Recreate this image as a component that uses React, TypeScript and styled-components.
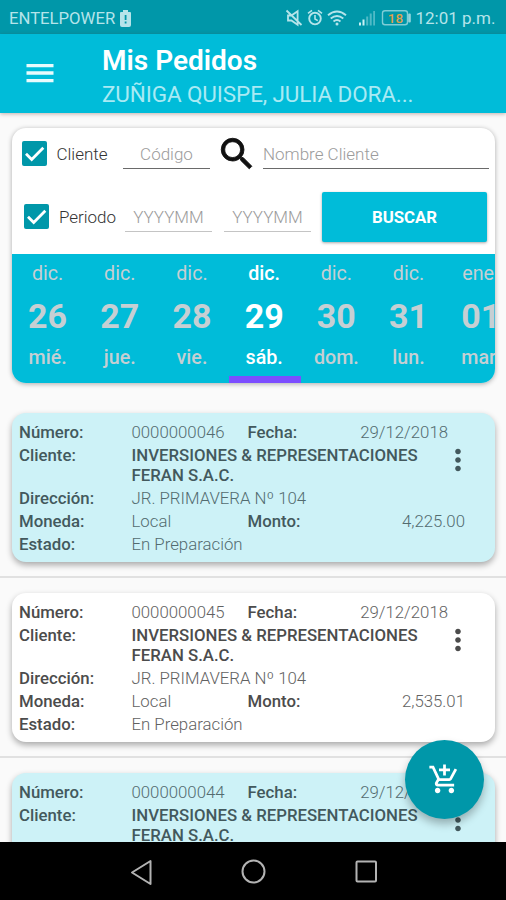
import React from "react";
import styled, { createGlobalStyle } from "styled-components";
import { MdSearch, MdAddShoppingCart, MdMoreVert } from "react-icons/md";

const GlobalStyle = createGlobalStyle`
  * { box-sizing: border-box; }
  body { margin: 0; background: #fafafa; font-family: Roboto, sans-serif; }
`;

const Screen = styled.div`
  position: relative;
  width: 506px;
  height: 900px;
  display: flex;
  flex-direction: column;
  overflow: hidden;
  background: #fafafa;
`;

const StatusBar = styled.div`
  height: 34px;
  flex: none;
  display: flex;
  align-items: center;
  padding: 2px 11.5px 0 9px;
  background: #0097a9;
  color: #b5e4ea;
`;

const Carrier = styled.span`
  font-size: 16.7px;
  letter-spacing: 0;
  margin-right: 5px;
`;

const StatusIcons = styled.div`
  display: flex;
  align-items: center;
  margin-left: auto;
`;

const Clock = styled.span`
  font-size: 17px;
  width: 79px;
  margin-left: 4.5px;
  white-space: nowrap;
`;

const AppBar = styled.header`
  position: relative;
  z-index: 1;
  height: 79px;
  flex: none;
  display: flex;
  padding-left: 26px;
  background: #00bcd9;
  box-shadow: 0 1px 4px rgba(90, 40, 30, 0.35);
`;

const MenuButton = styled.div`
  width: 76px;
  padding-top: 29px;
`;

const Titles = styled.div`
  padding-top: 10px;
`;

const Title = styled.h1`
  margin: 0;
  font-size: 28px;
  line-height: 34px;
  font-weight: 600;
  letter-spacing: 0;
  color: #fff;
`;

const Subtitle = styled.div`
  font-size: 22.5px;
  line-height: 33px;
  font-weight: 400;
  letter-spacing: -0.12px;
  color: #a9eaf4;
`;

const Content = styled.main`
  flex: 1;
  min-height: 0;
  overflow: hidden;
`;

const FilterCard = styled.section`
  margin: 15px 11px 0 12px;
  height: 255px;
  border-radius: 14px;
  background: #fff;
  box-shadow: 0 1px 5px rgba(0, 0, 0, 0.32);
  overflow: hidden;
`;

const FilterRow = styled.div<{ $h: number; $left: number }>`
  display: flex;
  align-items: center;
  height: ${(p) => p.$h}px;
  padding-left: ${(p) => p.$left}px;
`;

const CheckBox = styled.div`
  width: 25px;
  height: 25px;
  flex: none;
  border-radius: 2px;
  background: #0097a9;
  display: flex;
`;

const FilterLabel = styled.span<{ $w: number }>`
  width: ${(p) => p.$w}px;
  padding-left: 9.5px;
  flex: none;
  font-size: 17px;
  font-weight: 300;
  color: #333;
`;

const Field = styled.div<{ $w: number; $gap?: number; $soft?: boolean; $align?: string }>`
  width: ${(p) => p.$w}px;
  height: 30px;
  flex: none;
  margin-right: ${(p) => p.$gap ?? 0}px;
  border-bottom: ${(p) => (p.$soft ? "1px solid #c4c4c4" : "1.5px solid #6a6a6a")};
  text-align: ${(p) => p.$align ?? "center"};
  font-size: 17px;
  line-height: 30px;
  font-weight: 300;
  color: #9c9c9c;
`;

const SearchIcon = styled(MdSearch)`
  width: 42px;
  height: 42px;
  flex: none;
  margin: 0 5.5px;
  color: #111;
  path:not([fill="none"]) {
    stroke: #111;
    stroke-width: 0.5px;
  }
`;

const SearchButton = styled.button`
  width: 165px;
  height: 50px;
  border: 0;
  border-radius: 2px;
  background: #00bcd9;
  color: #fff;
  font: 700 16.8px Roboto, sans-serif;
  box-shadow: 0 1px 3px rgba(0, 0, 0, 0.35);
`;

const Days = styled.div`
  display: flex;
  height: 129px;
  background: #00bcd9;
  overflow: hidden;
`;

const Day = styled.div<{ $active: boolean }>`
  width: 72.2px;
  flex: none;
  height: 129px;
  display: flex;
  flex-direction: column;
  align-items: center;
  padding: 8px 1px 0 0;
  color: ${(p) => (p.$active ? "#fff" : "#c6cfd3")};
  font-size: 19.7px;
  line-height: 24px;
  font-weight: 500;
  border-bottom: 7px solid ${(p) => (p.$active ? "#7c4dff" : "transparent")};
`;

const Month = styled.span<{ $active: boolean }>`
  font-weight: ${(p) => (p.$active ? 500 : 400)};
`;

const DayNumber = styled.span`
  font-size: 34px;
  line-height: 60px;
  font-weight: 700;
`;

const OrderItem = styled.div`
  height: 180px;
  padding: 15px 11px 15px 12px;
  border-bottom: 2px solid #e1e1e1;
`;

const OrderList = styled.div`
  padding-top: 15px;
`;

const OrderCard = styled.article<{ $tinted: boolean }>`
  height: 149px;
  border-radius: 14px;
  padding: 9px 0 0 7px;
  background: ${(p) => (p.$tinted ? "#cdf2f7" : "#fff")};
  box-shadow: 0 3px 6px rgba(0, 0, 0, 0.33);
  display: grid;
  grid-template-columns: 112.5px 116px 178px 1fr;
  grid-auto-rows: min-content;
  row-gap: 3px;
  font-size: 16.8px;
  line-height: 20px;
  color: ${(p) => (p.$tinted ? "#43595d" : "#4c4c4c")};
  white-space: nowrap;
`;

const Label = styled.span`
  font-weight: 500;
`;

const Value = styled.span`
  font-weight: 300;
  opacity: 0.88;
`;

const WideValue = styled(Value)`
  grid-column: 2 / -1;
`;

const Customer = styled.span`
  grid-column: 2 / 4;
  font-weight: 500;
`;

const Pair = styled.span<{ $end: number }>`
  grid-column: 3 / -1;
  display: flex;
  justify-content: space-between;
  padding-right: ${(p) => p.$end}px;
`;

const More = styled.span`
  grid-column: 4;
  height: 20px;
  svg { width: 34px; height: 34px; margin: -2px 0 0 15px; display: block; }
`;

const Fab = styled.div`
  position: absolute;
  z-index: 2;
  left: 405px;
  top: 740px;
  width: 79px;
  height: 79px;
  border-radius: 50%;
  background: #0097a9;
  color: #fff;
  display: flex;
  align-items: center;
  justify-content: center;
  box-shadow: 0 5px 8px rgba(0, 0, 0, 0.28);
  svg { width: 33px; height: 33px; margin-top: -1px; }
`;

const NavBar = styled.nav`
  height: 58px;
  flex: none;
  background: #000;
  display: flex;
  justify-content: center;
  svg { display: block; }
`;

const Check = () => (
  <CheckBox>
    <svg width="25" height="25" viewBox="0 0 25 25" fill="none" stroke="#fff" strokeWidth="2.8">
      <path d="M4 12.7 9.7 18.4 21.3 6.8" />
    </svg>
  </CheckBox>
);

const days: [string, string, string][] = [
  ["dic.", "26", "mié."],
  ["dic.", "27", "jue."],
  ["dic.", "28", "vie."],
  ["dic.", "29", "sáb."],
  ["dic.", "30", "dom."],
  ["dic.", "31", "lun."],
  ["ene.", "01", "mar."],
];

const orders = [
  { id: "0000000046", amount: "4,225.00" },
  { id: "0000000045", amount: "2,535.01" },
  { id: "0000000044", amount: "4,225.00" },
];

const StatusGlyphs = () => (
  <svg width="126" height="20" viewBox="0 0 126 20" fill="none" stroke="#b5e4ea" strokeWidth="1.6">
    <path d="M3 7.5v5h3.4l6.2 4.2V3.3L6.4 7.5zM1.5 2.5l15 14.5" strokeWidth="1.8" />
    <circle cx="30" cy="10.6" r="5.8" strokeWidth="1.9" />
    <path d="M30 7v4l2.8 1.6M23 5.3l4-3M37 5.3l-4-3" />
    <path d="M43 7.3q9-7.5 18 0M45.7 10.5q6.3-5 12.6 0M48.5 13.4q3.5-2.8 7 0" strokeWidth="1.9" />
    <circle cx="52" cy="16" r="1.5" fill="#b5e4ea" stroke="none" />
    <g stroke="none" fill="#c9f1f5">
      <rect x="74" y="14.5" width="2" height="3" />
      <rect x="77.5" y="11.5" width="2" height="6" />
      <rect x="81.2" y="8.5" width="2" height="9" opacity=".4" />
      <rect x="84.7" y="5.5" width="2" height="12" opacity=".4" />
      <rect x="88.2" y="3" width="1.8" height="14.5" opacity=".4" />
    </g>
    <rect x="97.5" y="2.8" width="25" height="14" rx="2.5" strokeWidth="1.4" opacity=".7" />
    <rect x="123.2" y="5.5" width="2.6" height="9" rx="1" fill="#b5e4ea" stroke="none" opacity=".8" />
    <text x="110.5" y="14.6" textAnchor="middle" fontSize="13.5" fontWeight="500" letterSpacing=".2" fill="#dfa04c" stroke="none">18</text>
  </svg>
);

export default function App() {
  return (
    <>
      <GlobalStyle />
      <Screen>
        <StatusBar>
          <Carrier>ENTELPOWER</Carrier>
          <svg width="11" height="17" viewBox="0 0 11 17">
            <path d="M3 0h5v2h2q1 0 1 1v12q0 2-2 2H2q-2 0-2-2V3q0-1 1-1h2z" fill="#b5e4ea" />
            <path d="M4.7 5h1.8v5H4.7zM4.7 11.5h1.8v2H4.7z" fill="#0097a9" />
          </svg>
          <StatusIcons>
            <StatusGlyphs />
            <Clock>12:01 p.m.</Clock>
          </StatusIcons>
        </StatusBar>
        <AppBar>
          <MenuButton>
            <svg width="28" height="20" viewBox="0 0 28 20" fill="#e9fbfd">
              <path d="M.5 1h27v3.2H.5zM.5 8.3h27v3.4H.5zM.5 16h27v3.2H.5z" />
            </svg>
          </MenuButton>
          <Titles>
            <Title>Mis Pedidos</Title>
            <Subtitle>ZUÑIGA QUISPE, JULIA DORA...</Subtitle>
          </Titles>
        </AppBar>
        <Content>
          <FilterCard>
            <FilterRow $h={51} $left={10}>
              <Check />
              <FilterLabel $w={76}>Cliente</FilterLabel>
              <Field $w={87}>Código</Field>
              <SearchIcon />
              <Field $w={226} $align="left">Nombre Cliente</Field>
            </FilterRow>
            <FilterRow $h={75} $left={12.4}>
              <Check />
              <FilterLabel $w={75.6}>Periodo</FilterLabel>
              <Field $w={87} $gap={12} $soft>YYYYMM</Field>
              <Field $w={87} $gap={11} $soft>YYYYMM</Field>
              <SearchButton>BUSCAR</SearchButton>
            </FilterRow>
            <Days>
              {days.map(([month, number, weekday]) => (
                <Day key={number} $active={number === "29"}>
                  <Month $active={number === "29"}>{month}</Month>
                  <DayNumber>{number}</DayNumber>
                  <span>{weekday}</span>
                </Day>
              ))}
            </Days>
          </FilterCard>
          <OrderList>
            {orders.map((order, i) => (
              <OrderItem key={order.id}>
                <OrderCard $tinted={i % 2 === 0}>
                  <Label>Número:</Label>
                  <Value>{order.id}</Value>
                  <Pair $end={47}>
                    <Label>Fecha:</Label>
                    <Value>29/12/2018</Value>
                  </Pair>
                  <Label>Cliente:</Label>
                  <Customer>
                    INVERSIONES &amp; REPRESENTACIONES
                    <br />
                    FERAN S.A.C.
                  </Customer>
                  <More>
                    <MdMoreVert />
                  </More>
                  <Label>Dirección:</Label>
                  <WideValue>JR. PRIMAVERA Nº 104</WideValue>
                  <Label>Moneda:</Label>
                  <Value>Local</Value>
                  <Pair $end={30}>
                    <Label>Monto:</Label>
                    <Value>{order.amount}</Value>
                  </Pair>
                  <Label>Estado:</Label>
                  <WideValue>En Preparación</WideValue>
                </OrderCard>
              </OrderItem>
            ))}
          </OrderList>
        </Content>
        <Fab>
          <MdAddShoppingCart />
        </Fab>
        <NavBar>
          <svg width="506" height="58" viewBox="0 0 506 58" fill="none" stroke="#b3b3b3" strokeWidth="2">
            <path d="M150.5 19v23L132 30.5z" strokeLinejoin="round" />
            <circle cx="253.5" cy="29.5" r="11" />
            <rect x="356.5" y="19.5" width="19.5" height="20" rx="1" />
          </svg>
        </NavBar>
      </Screen>
    </>
  );
}
